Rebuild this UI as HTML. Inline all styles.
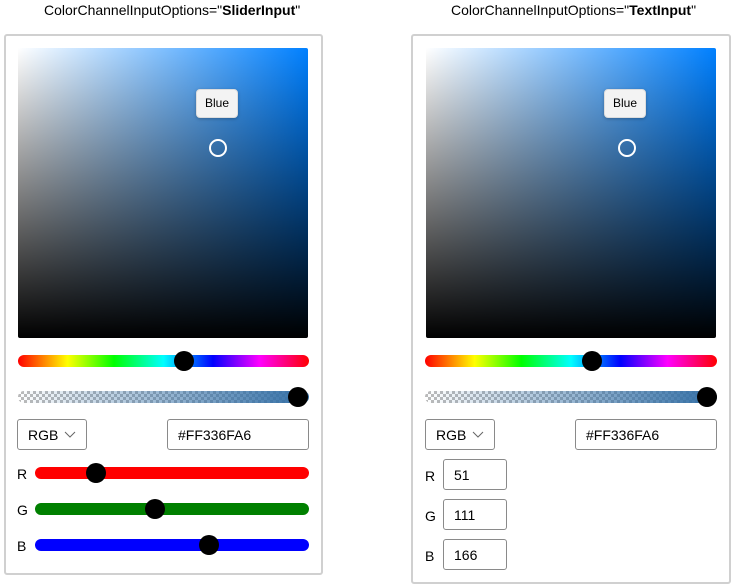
<!DOCTYPE html>
<html><head><style>
*{box-sizing:border-box;margin:0;padding:0}
body{width:733px;height:587px;background:#fff;font-family:"Liberation Sans",sans-serif;position:relative;overflow:hidden;color:#000}
.a{position:absolute}
.title{font-size:14px;top:2px;white-space:nowrap}
.panel{border:2px solid #d0d0d0;border-radius:3px;top:34px}
.spec{width:290px;height:290px;top:48px;border-radius:2px;background:linear-gradient(to bottom,rgba(0,0,0,0),#000),linear-gradient(to right,#fff,#0080ff)}
.tip{width:42px;height:29px;background:#f3f3f3;border:1px solid #ddd;border-radius:4px;font-size:12px;text-align:center;line-height:27px;box-shadow:0 1px 3px rgba(0,0,0,.25)}
.ring{width:18px;height:18px;border:2px solid #fff;border-radius:50%}
.hue{height:12px;border-radius:6px;background:linear-gradient(to right,#f00,#ff0 17%,#0f0 33%,#0ff 50%,#00f 67%,#f0f 83%,#f00)}
.alpha{height:12px;border-radius:6px;background:linear-gradient(to right,rgba(51,111,166,0),rgba(51,111,166,1)),repeating-conic-gradient(#bbb 0 25%,#fff 0 50%) 0 0/6px 6px}
.th{width:20px;height:20px;border-radius:50%;background:#000}
.box{border:1px solid #8a8a8a;border-radius:3px;height:31px;font-size:14px;line-height:30px;padding-left:10px;background:#fff}
.lbl{font-size:14px}
.chev{position:absolute;left:46px;top:11px}
</style></head><body>
<div class="a title" style="left:44px">ColorChannelInputOptions="<b>SliderInput</b>"</div>
<div class="a title" style="left:451px">ColorChannelInputOptions="<b>TextInput</b>"</div>

<div class="a panel" style="left:4px;width:319px;height:541px"></div>
<div class="a panel" style="left:411px;width:320px;height:550px"></div>

<!-- left -->
<div class="a spec" style="left:18px"></div>
<div class="a tip" style="left:196px;top:89px">Blue</div>
<div class="a ring" style="left:209px;top:139px"></div>
<div class="a hue" style="left:18px;top:355px;width:291px"></div>
<div class="a th" style="left:174px;top:351px"></div>
<div class="a alpha" style="left:18px;top:391px;width:291px"></div>
<div class="a th" style="left:288px;top:387px"></div>
<div class="a box" style="left:17px;top:419px;width:70px">RGB <svg class="chev" width="12" height="8"><path d="M1 1L6 6L11 1" fill="none" stroke="#666" stroke-width="1"/></svg></div>
<div class="a box" style="left:167px;top:419px;width:142px">#FF336FA6</div>
<div class="a lbl" style="left:17px;top:466px">R</div>
<div class="a lbl" style="left:17px;top:502px">G</div>
<div class="a lbl" style="left:17px;top:538px">B</div>
<div class="a" style="left:35px;top:467px;width:274px;height:12px;border-radius:6px;background:#f00"></div>
<div class="a th" style="left:86px;top:463px"></div>
<div class="a" style="left:35px;top:503px;width:274px;height:12px;border-radius:6px;background:#008000"></div>
<div class="a th" style="left:145px;top:499px"></div>
<div class="a" style="left:35px;top:539px;width:274px;height:12px;border-radius:6px;background:#00f"></div>
<div class="a th" style="left:199px;top:535px"></div>

<!-- right -->
<div class="a spec" style="left:426px"></div>
<div class="a tip" style="left:604px;top:89px">Blue</div>
<div class="a ring" style="left:618px;top:139px"></div>
<div class="a hue" style="left:425px;top:355px;width:292px"></div>
<div class="a th" style="left:582px;top:351px"></div>
<div class="a alpha" style="left:425px;top:391px;width:292px"></div>
<div class="a th" style="left:697px;top:387px"></div>
<div class="a box" style="left:425px;top:419px;width:70px">RGB <svg class="chev" width="12" height="8"><path d="M1 1L6 6L11 1" fill="none" stroke="#666" stroke-width="1"/></svg></div>
<div class="a box" style="left:575px;top:419px;width:142px">#FF336FA6</div>
<div class="a lbl" style="left:425px;top:468px">R</div>
<div class="a lbl" style="left:425px;top:508px">G</div>
<div class="a lbl" style="left:425px;top:548px">B</div>
<div class="a box" style="left:443px;top:459px;width:64px">51</div>
<div class="a box" style="left:443px;top:499px;width:64px">111</div>
<div class="a box" style="left:443px;top:539px;width:64px">166</div>
</body></html>
